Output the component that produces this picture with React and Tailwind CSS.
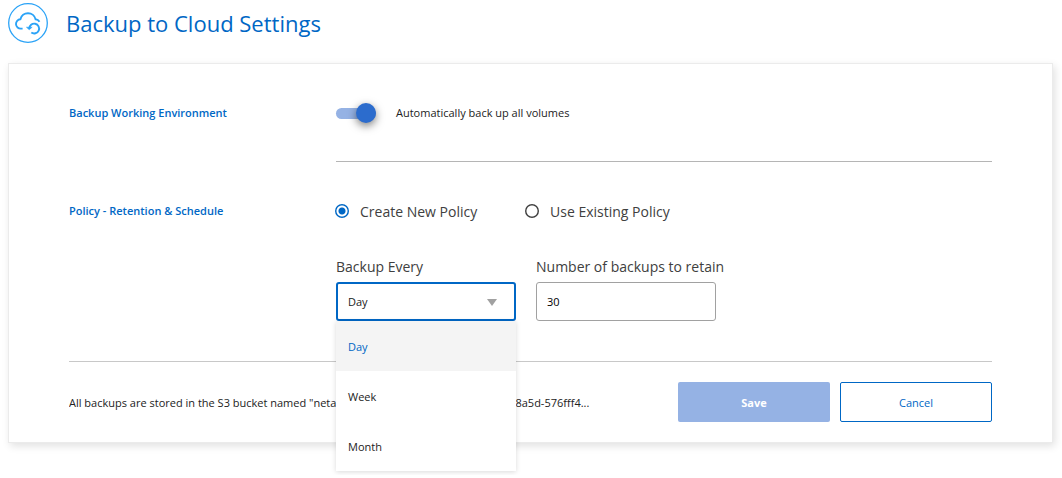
import { useState } from 'react';

const PERIODS = ['Day', 'Week', 'Month'];

function CloudBackupIcon() {
  return (
    <svg viewBox="0 0 40 40" className="size-10 shrink-0" fill="none" stroke="#2ba3f7" aria-hidden="true">
      <circle cx="20" cy="20" r="19.3" strokeWidth="1.3" />
      <path
        d="M14.6 25.6H13a4.7 4.7 0 0 1-.6-9.4 7.8 7.8 0 0 1 15.2 0.1c1.7.2 3 1 3.9 2.4"
        strokeWidth="1.9"
      />
      <path d="M21.3 25.6a4.9 4.9 0 1 1 2 3.9" strokeWidth="1.9" />
      <path d="M18.4 24.2l2.8 2.6 3-2.6z" fill="#2ba3f7" strokeWidth="0.5" />
    </svg>
  );
}

function Switch({ id, checked, onChange }) {
  return (
    <span className="relative flex h-5 w-10 shrink-0 items-center">
      <span className="h-[11px] w-full rounded-full bg-[#95b2e4]" />
      <input
        id={id}
        type="checkbox"
        role="switch"
        checked={checked}
        onChange={(e) => onChange(e.target.checked)}
        className="absolute left-0 top-0 size-5 cursor-pointer appearance-none rounded-full bg-gray-400 shadow-[0_3px_8px_rgba(0,0,0,0.5)] checked:left-5 checked:bg-[#2c6ccd]"
      />
    </span>
  );
}

function PolicyRadio({ value, label, selected, onSelect }) {
  return (
    <label className="-ml-px flex h-[22px] w-[191px] items-start gap-[11px] text-sm leading-[22px] text-[#404040]">
      <input
        type="radio"
        name="policy"
        value={value}
        checked={selected}
        onChange={() => onSelect(value)}
        className="mt-[3px] size-3.5 appearance-none rounded-full bg-[radial-gradient(circle,white_5px,#404040_6px)] checked:bg-[radial-gradient(circle,#0067c5_3px,white_4px,white_5px,#0067c5_6px)]"
      />
      {label}
    </label>
  );
}

function PeriodSelect({ value, onChange }) {
  const [open, setOpen] = useState(true);
  return (
    <div className="relative">
      <select
        id="period"
        value={value}
        onChange={(e) => onChange(e.target.value)}
        onMouseDown={(e) => {
          e.preventDefault();
          setOpen(!open);
        }}
        className="block h-[39px] w-full appearance-none rounded-[3px] border-2 border-[#0067c5] bg-white px-2.5 text-[11px] text-[#222] outline-none"
      >
        {PERIODS.map((p) => (
          <option key={p}>{p}</option>
        ))}
      </select>
      <svg
        viewBox="0 0 10 7"
        className="pointer-events-none absolute right-[19px] top-[17px] h-[7px] w-2.5"
        fill="#a1a1a1"
        aria-hidden="true"
      >
        <path d="M0 0h10L5 7z" />
      </svg>
      {open && (
        <ul className="absolute left-0 top-full z-10 w-full bg-white shadow-[0_1px_5px_rgba(0,0,0,0.15)]">
          {PERIODS.map((p) => (
            <li key={p}>
              <button
                type="button"
                onClick={() => {
                  onChange(p);
                  setOpen(false);
                }}
                className={
                  p === value
                    ? 'block h-[50px] w-full bg-[#f4f4f4] px-3 pt-0.5 text-left text-[#0067c5]'
                    : 'block h-[50px] w-full bg-white px-3 pt-0.5 text-left'
                }
              >
                {p}
              </button>
            </li>
          ))}
        </ul>
      )}
    </div>
  );
}

export default function App() {
  const [auto, setAuto] = useState(true);
  const [policy, setPolicy] = useState('new');
  const [period, setPeriod] = useState('Day');
  const [count, setCount] = useState('30');

  return (
    <main className="bg-white px-2 pb-8 pt-[3px] font-['Open_Sans',sans-serif] text-[11px] leading-[18px] text-[#222]">
      <header className="flex items-center gap-[18px]">
        <CloudBackupIcon />
        <h1 className="text-[22px] leading-10 text-[#0067c5]">Backup to Cloud Settings</h1>
      </header>

      <form
        className="mr-px mt-5 border border-[#ebebeb] px-[60px] shadow-[2px_3px_8px_rgba(0,0,0,0.12)]"
        onSubmit={(e) => e.preventDefault()}
      >
        <section className="flex pt-[39px]">
          <h2 className="w-[267px] shrink-0 font-semibold leading-5 text-[#0067c5]">
            Backup Working Environment
          </h2>
          <div className="flex flex-1 items-center gap-5 border-b border-[#b5b5b5] pb-[38px]">
            <Switch id="auto" checked={auto} onChange={setAuto} />
            <label htmlFor="auto" className="leading-5">
              Automatically back up all volumes
            </label>
          </div>
        </section>

        <section className="flex pb-10 pt-[39px]">
          <h2 className="w-[267px] shrink-0 font-semibold leading-5 text-[#0067c5]">
            Policy - Retention &amp; Schedule
          </h2>
          <div className="flex-1">
            <div className="flex">
              <PolicyRadio value="new" label="Create New Policy" selected={policy === 'new'} onSelect={setPolicy} />
              <PolicyRadio
                value="existing"
                label="Use Existing Policy"
                selected={policy === 'existing'}
                onSelect={setPolicy}
              />
            </div>
            <div className="mt-[34px] flex gap-5">
              <div className="flex w-[180px] flex-col gap-[5px]">
                <label htmlFor="period" className="whitespace-nowrap text-sm text-[#404040]">
                  Backup Every
                </label>
                <PeriodSelect value={period} onChange={setPeriod} />
              </div>
              <div className="flex w-[180px] flex-col gap-[5px]">
                <label htmlFor="count" className="whitespace-nowrap text-sm text-[#404040]">
                  Number of backups to retain
                </label>
                <input
                  id="count"
                  type="text"
                  value={count}
                  onChange={(e) => setCount(e.target.value)}
                  className="h-[39px] w-full rounded-[3px] border border-[#a1a1a1] px-2.5 text-[11px] text-black"
                />
              </div>
            </div>
          </div>
        </section>

        <footer className="flex items-center gap-2.5 border-t border-[#c8c8c8] py-5">
          <p className="min-w-0 flex-1 truncate pt-0.5">
            All backups are stored in the S3 bucket named "netapp-backup-1f3c2b7e-4d9a-4e02b6-8a5d-576fff4...
          </p>
          <button type="submit" className="h-10 w-[152px] rounded-[2px] bg-[#95b2e4] pt-0.5 font-bold text-white">
            Save
          </button>
          <button
            type="button"
            className="h-10 w-[152px] rounded-[2px] border border-[#0067c5] bg-white pt-0.5 text-[#0067c5]"
          >
            Cancel
          </button>
        </footer>
      </form>
    </main>
  );
}
